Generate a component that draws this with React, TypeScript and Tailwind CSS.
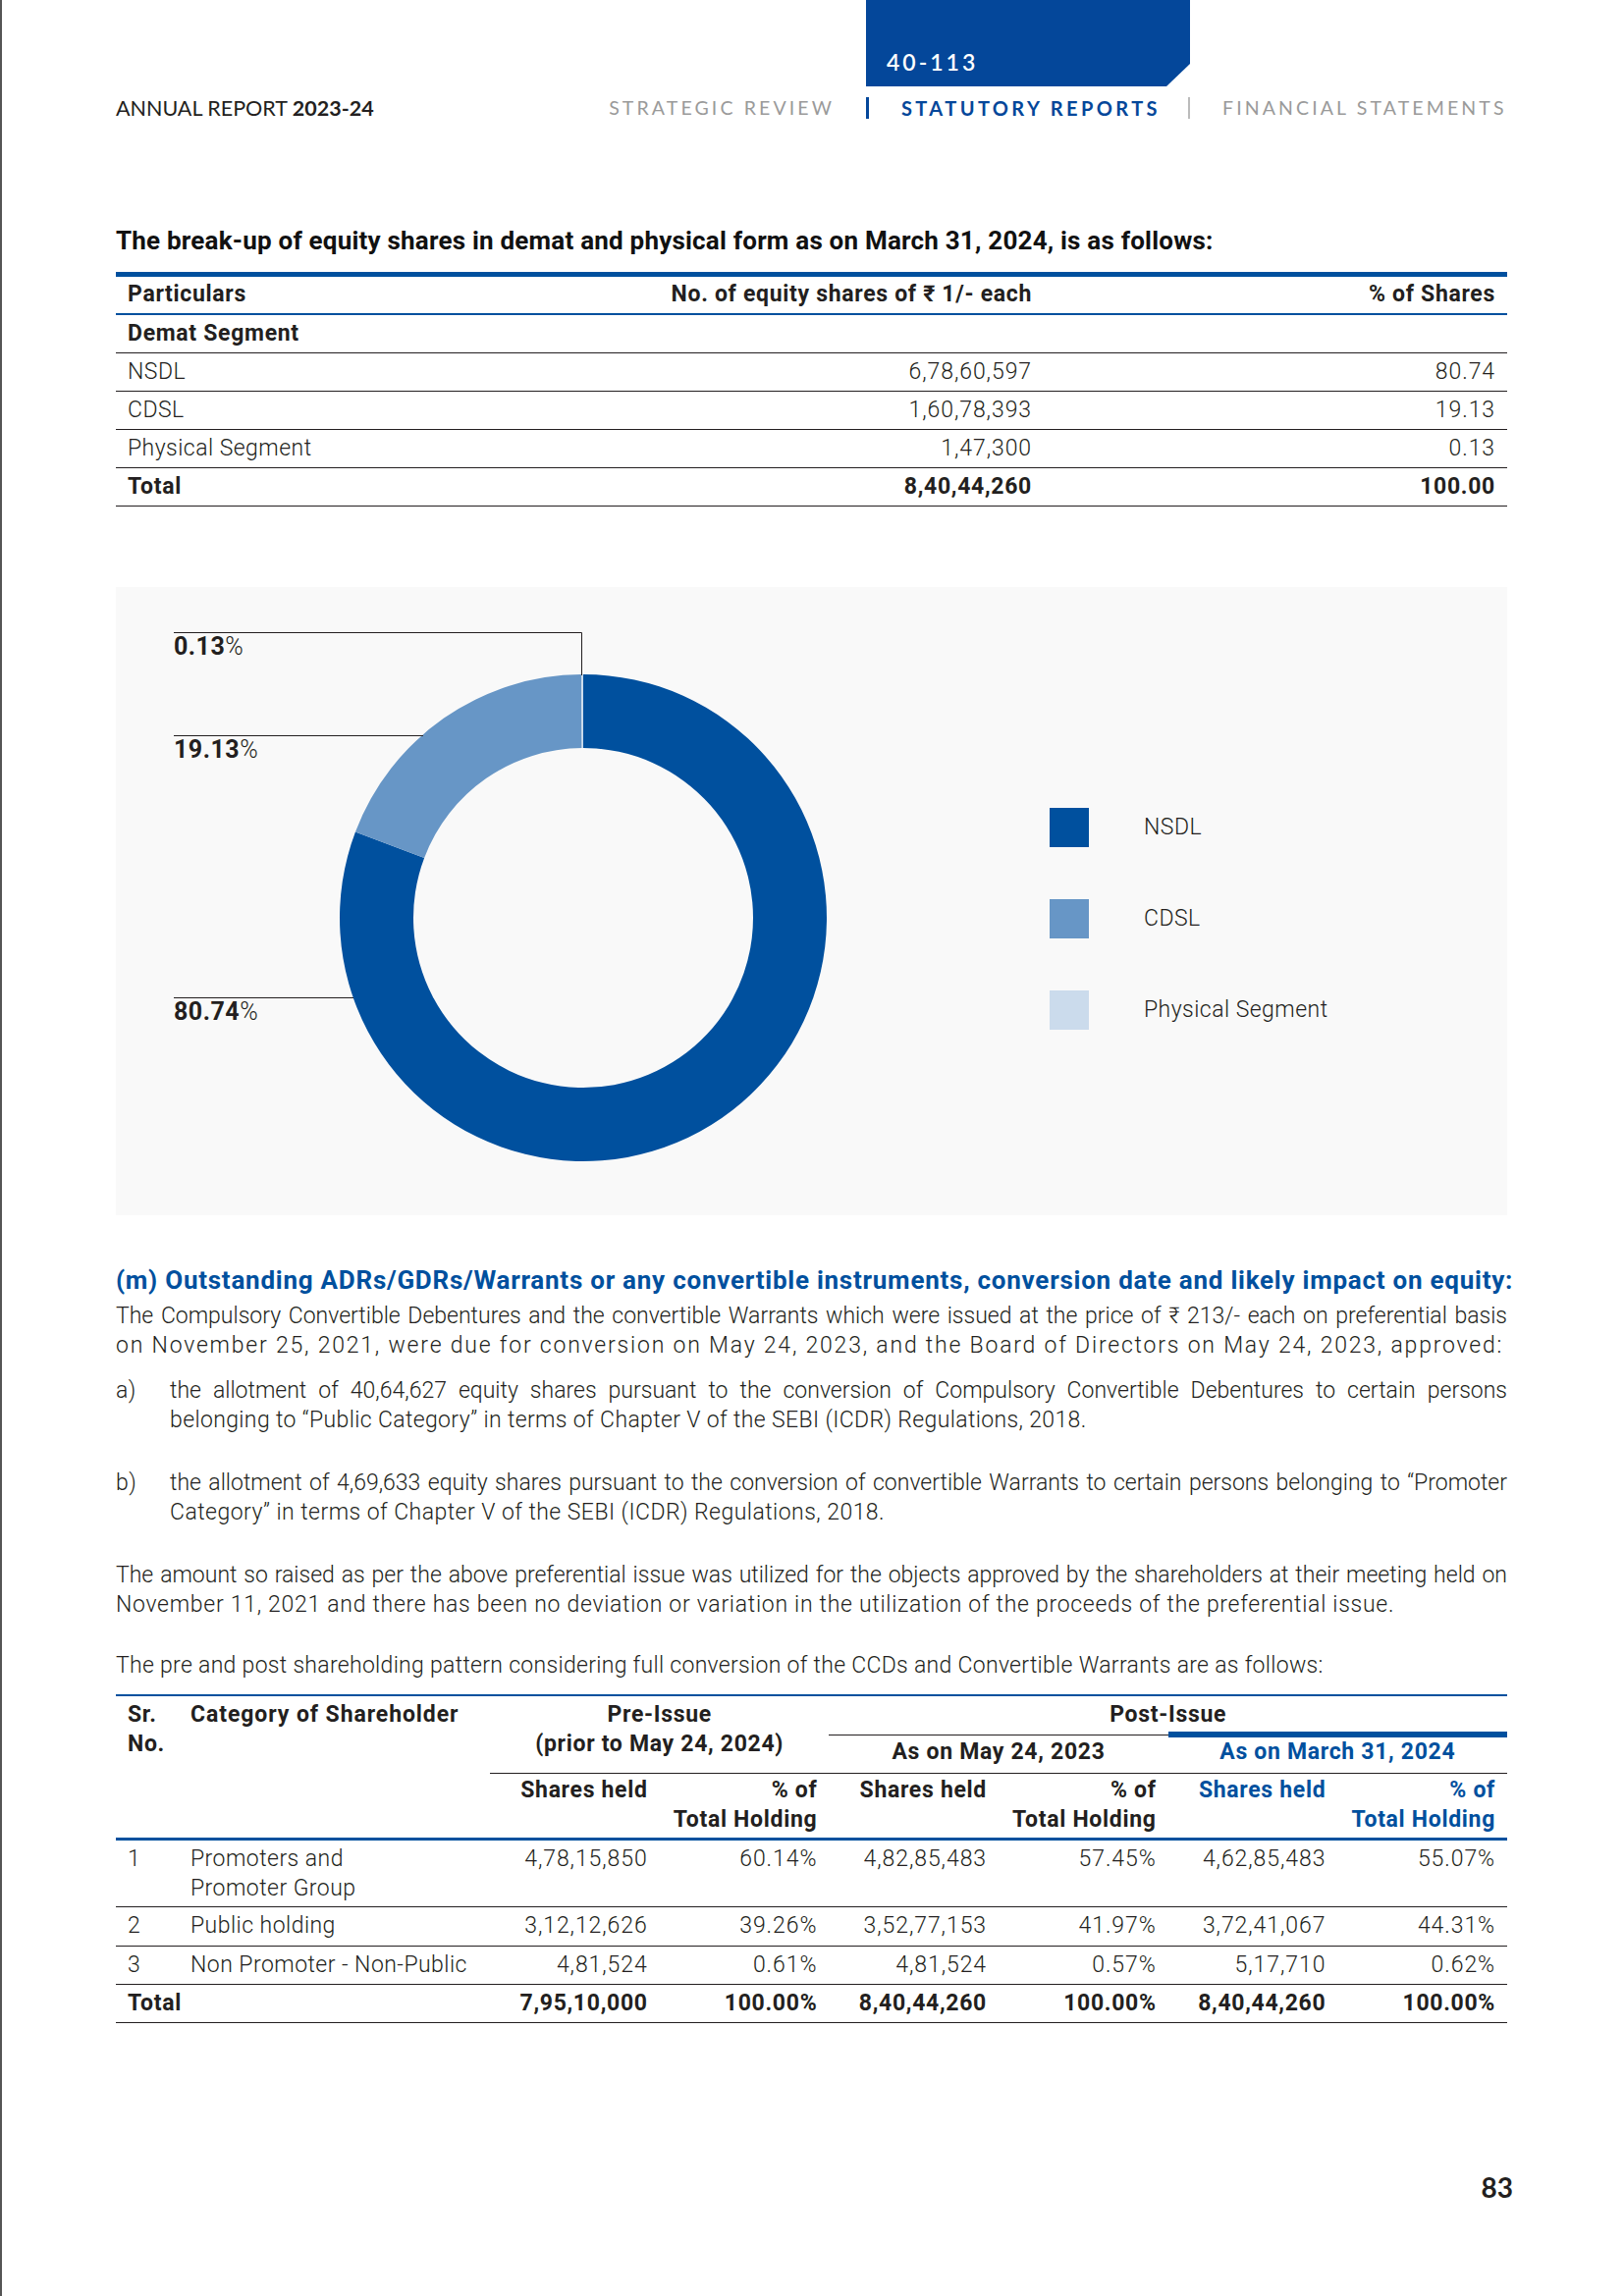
import React from 'react';

const slices = [
  { label: 'NSDL', pct: 80.74, color: '#00509e' },
  { label: 'CDSL', pct: 19.13, color: '#6796c6' },
  { label: 'Physical Segment', pct: 0.13, color: '#cbdbec' },
];

const polar = (cx: number, cy: number, r: number, deg: number) => {
  const a = ((deg - 90) * Math.PI) / 180;
  return [cx + r * Math.cos(a), cy + r * Math.sin(a)];
};

const ringSlice = (cx: number, cy: number, ro: number, ri: number, a0: number, a1: number) => {
  const large = a1 - a0 > 180 ? 1 : 0;
  const [x0, y0] = polar(cx, cy, ro, a0);
  const [x1, y1] = polar(cx, cy, ro, a1);
  const [x2, y2] = polar(cx, cy, ri, a1);
  const [x3, y3] = polar(cx, cy, ri, a0);
  return `M${x0} ${y0} A${ro} ${ro} 0 ${large} 1 ${x1} ${y1} L${x2} ${y2} A${ri} ${ri} 0 ${large} 0 ${x3} ${y3} Z`;
};

// justified line that is not the last one of its paragraph
const J: React.FC<{ children: React.ReactNode }> = ({ children }) => (
  <span className="block tracking-normal text-justify [text-align-last:justify]">{children}</span>
);

const breakup = [
  { name: 'NSDL', shares: '6,78,60,597', pct: '80.74' },
  { name: 'CDSL', shares: '1,60,78,393', pct: '19.13' },
  { name: 'Physical Segment', shares: '1,47,300', pct: '0.13' },
];

const pattern = [
  { no: '1', cat: ['Promoters and', 'Promoter Group'], v: ['4,78,15,850', '60.14%', '4,82,85,483', '57.45%', '4,62,85,483', '55.07%'], h: 'h-[68px]' },
  { no: '2', cat: ['Public holding'], v: ['3,12,12,626', '39.26%', '3,52,77,153', '41.97%', '3,72,41,067', '44.31%'], h: 'h-[40px]' },
  { no: '3', cat: ['Non Promoter - Non-Public'], v: ['4,81,524', '0.61%', '4,81,524', '0.57%', '5,17,710', '0.62%'], h: 'h-[39px]' },
];

const totals = ['7,95,10,000', '100.00%', '8,40,44,260', '100.00%', '8,40,44,260', '100.00%'];

const Donut: React.FC = () => {
  let acc = 0;
  return (
    <div className="relative w-[665px] h-[560px] shrink-0">
      <svg width="665" height="560" className="block">
        {slices.map((s) => {
          const a0 = acc;
          acc += (s.pct / 100) * 360;
          return <path key={s.label} d={ringSlice(417, 297, 248, 173, a0, acc)} fill={s.color} />;
        })}
        <polyline points="0,6.5 415.5,6.5 415.5,50" fill="none" stroke="#231f20" strokeWidth="1" />
        <line x1="0" y1="111.5" x2="254" y2="111.5" stroke="#231f20" strokeWidth="1" />
        <line x1="0" y1="378.5" x2="183" y2="378.5" stroke="#231f20" strokeWidth="1" />
      </svg>
      <div className="absolute left-0 top-[7px] text-[25px] leading-[28px] tracking-[0.02em]"><span className="font-bold">0.13</span><span className="font-light">%</span></div>
      <div className="absolute left-0 top-[112px] text-[25px] leading-[28px] tracking-[0.02em]"><span className="font-bold">19.13</span><span className="font-light">%</span></div>
      <div className="absolute left-0 top-[379px] text-[25px] leading-[28px] tracking-[0.02em]"><span className="font-bold">80.74</span><span className="font-light">%</span></div>
    </div>
  );
};

export default function App() {
  return (
    <div className="w-[1654px] min-h-[2339px] bg-white border-l-2 border-[#555] pl-[116px] pr-[119px] font-['Roboto',sans-serif] text-[#231f20]">
      {/* running header */}
      <header className="flex items-end font-['Lato',sans-serif]">
        <div className="flex-1 h-[44px] flex items-center text-[21.5px] text-[#231f20]">
          ANNUAL REPORT&nbsp;<span className="font-bold">2023-24</span>
        </div>
        <div className="h-[44px] flex items-center pr-[32px] text-[19.5px] tracking-[0.16em] text-[#9a9a9a]">STRATEGIC REVIEW</div>
        <div className="w-[330px] flex flex-col">
          <div className="h-[88px] bg-[#04479a] flex items-end pl-[21px] pb-[11px] [clip-path:polygon(0_0,100%_0,100%_74%,calc(100%-24px)_100%,0_100%)]">
            <span className="text-white text-[23px] leading-[28px] font-semibold tracking-[0.13em]">40-113</span>
          </div>
          <div className="h-[44px] flex items-center">
            <span className="w-[3px] h-[22px] bg-[#04479a]"></span>
            <span className="ml-[33px] text-[20px] font-bold tracking-[0.17em] text-[#04479a] whitespace-nowrap">STATUTORY REPORTS</span>
            <span className="ml-auto w-[2px] h-[22px] bg-[#bbbbbb]"></span>
          </div>
        </div>
        <div className="w-[323px] h-[44px] flex items-center pl-[33px] text-[19.5px] tracking-[0.16em] text-[#9a9a9a] whitespace-nowrap">FINANCIAL STATEMENTS</div>
      </header>

      {/* break-up table */}
      <h2 className="mt-[97px] text-[26px] leading-[32px] font-bold tracking-[0.008em] text-[#111] whitespace-nowrap">
        The break-up of equity shares in demat and physical form as on March 31, 2024, is as follows:
      </h2>
      <div className="mt-[16px] border-t-[5px] border-[#00509e] text-[23px]">
        <div className="grid grid-cols-[500px_445px_1fr] items-center h-[39px] border-b-2 border-[#00509e] font-bold tracking-[0.03em]">
          <div className="pl-[12px]">Particulars</div>
          <div className="pr-[12px] text-right">No. of equity shares of ₹ 1/- each</div>
          <div className="pr-[12px] text-right">% of Shares</div>
        </div>
        <div className="grid grid-cols-[500px_445px_1fr] items-center h-[39px] border-b border-[#231f20] font-bold tracking-[0.03em]">
          <div className="pl-[12px]">Demat Segment</div>
        </div>
        {breakup.map((r) => (
          <div key={r.name} className="grid grid-cols-[500px_445px_1fr] items-center h-[39px] border-b border-[#231f20] font-light">
            <div className="pl-[12px] tracking-[0.02em]">{r.name}</div>
            <div className="pr-[12px] text-right tracking-[0.04em]">{r.shares}</div>
            <div className="pr-[12px] text-right tracking-[0.04em]">{r.pct}</div>
          </div>
        ))}
        <div className="grid grid-cols-[500px_445px_1fr] items-center h-[39px] border-b border-[#231f20] font-bold tracking-[0.03em]">
          <div className="pl-[12px]">Total</div>
          <div className="pr-[12px] text-right">8,40,44,260</div>
          <div className="pr-[12px] text-right">100.00</div>
        </div>
      </div>

      {/* chart */}
      <div className="mt-[82px] h-[640px] bg-[#f9f9f9] flex items-start pl-[59px] pt-[40px]">
        <Donut />
        <div className="ml-[227px] mt-[185px] flex flex-col gap-[53px]">
          {slices.map((s) => (
            <div key={s.label} className="flex items-center h-[40px]">
              <span className="w-[40px] h-[40px]" style={{ backgroundColor: s.color }}></span>
              <span className="ml-[56px] text-[23px] font-light tracking-[0.02em]">{s.label}</span>
            </div>
          ))}
        </div>
      </div>

      {/* (m) section */}
      <h3 className="mt-[50px] text-[26px] leading-[32px] font-bold tracking-[0.029em] text-[#00509e] whitespace-nowrap">
        (m) Outstanding ADRs/GDRs/Warrants or any convertible instruments, conversion date and likely impact on equity:
      </h3>
      <div className="text-[23px] leading-[30px] font-light tracking-[0.02em]">
        <p className="mt-[6px]">
          <J>The Compulsory Convertible Debentures and the convertible Warrants which were issued at the price of ₹ 213/- each on preferential basis</J>
          <span className="tracking-[0.078em] whitespace-nowrap">on November 25, 2021, were due for conversion on May 24, 2023, and the Board of Directors on May 24, 2023, approved:</span>
        </p>
        <div className="mt-[16px] flex">
          <span className="w-[55px] shrink-0">a)</span>
          <p className="flex-1">
            <J>the allotment of 40,64,627 equity shares pursuant to the conversion of Compulsory Convertible Debentures to certain persons</J>
            <span className="tracking-[0.016em]">belonging to “Public Category” in terms of Chapter V of the SEBI (ICDR) Regulations, 2018.</span>
          </p>
        </div>
        <div className="mt-[34px] flex">
          <span className="w-[55px] shrink-0">b)</span>
          <p className="flex-1">
            <J>the allotment of 4,69,633 equity shares pursuant to the conversion of convertible Warrants to certain persons belonging to “Promoter</J>
            Category” in terms of Chapter V of the SEBI (ICDR) Regulations, 2018.
          </p>
        </div>
        <p className="mt-[34px]">
          <J>The amount so raised as per the above preferential issue was utilized for the objects approved by the shareholders at their meeting held on</J>
          <span className="tracking-[0.031em] whitespace-nowrap">November 11, 2021 and there has been no deviation or variation in the utilization of the proceeds of the preferential issue.</span>
        </p>
        <p className="mt-[32px] tracking-[0.013em]">
          The pre and post shareholding pattern considering full conversion of the CCDs and Convertible Warrants are as follows:
        </p>
      </div>

      {/* shareholding pattern table */}
      <div className="mt-[14px] border-t-2 border-[#00509e] text-[23px] leading-[30px]">
        <div className="grid grid-cols-[64px_317px_repeat(6,minmax(0,1fr))] grid-rows-[36px_43px_68px] font-bold tracking-[0.03em]">
          <div className="col-start-1 row-start-1 row-span-3 pl-[12px] pt-[4px] border-b-[3px] border-[#00509e]">Sr.<br />No.</div>
          <div className="col-start-2 row-start-1 row-span-3 pl-[12px] pt-[4px] border-b-[3px] border-[#00509e] whitespace-nowrap tracking-[0.04em]">Category of Shareholder</div>
          <div className="col-start-3 col-span-2 row-start-1 row-span-2 pt-[4px] text-center border-b border-[#231f20]">Pre-Issue<br />(prior to May 24, 2024)</div>
          <div className="col-start-5 col-span-4 row-start-1 pt-[4px] text-center">Post-Issue</div>
          <div className="col-start-5 col-span-2 row-start-2 mt-[3px] pt-[2px] text-center border-t border-b border-[#231f20]">As on May 24, 2023</div>
          <div className="col-start-7 col-span-2 row-start-2 text-center text-[#00509e] border-t-[6px] border-t-[#00509e] border-b border-b-[#231f20]">As on March 31, 2024</div>
          {[0, 1, 2].map((i) => (
            <React.Fragment key={i}>
              <div className={`row-start-3 pt-[2px] pr-[12px] text-right border-b-[3px] border-[#00509e] whitespace-nowrap ${i === 2 ? 'text-[#00509e]' : ''}`}>Shares held</div>
              <div className={`row-start-3 pt-[2px] pr-[12px] text-right border-b-[3px] border-[#00509e] whitespace-nowrap ${i === 2 ? 'text-[#00509e]' : ''}`}>% of<br />Total Holding</div>
            </React.Fragment>
          ))}
        </div>
        {pattern.map((r) => (
          <div key={r.no} className={`grid grid-cols-[64px_317px_repeat(6,minmax(0,1fr))] ${r.h} pt-[4px] border-b border-[#231f20] font-light`}>
            <div className="pl-[12px]">{r.no}</div>
            <div className="pl-[12px] tracking-[0.02em]">
              {r.cat.map((c) => (
                <div key={c}>{c}</div>
              ))}
            </div>
            {r.v.map((v, i) => (
              <div key={i} className="pr-[12px] text-right tracking-[0.04em]">{v}</div>
            ))}
          </div>
        ))}
        <div className="grid grid-cols-[64px_317px_repeat(6,minmax(0,1fr))] h-[39px] pt-[4px] border-b border-[#231f20] font-bold tracking-[0.03em]">
          <div className="col-span-2 pl-[12px]">Total</div>
          {totals.map((v, i) => (
            <div key={i} className="pr-[12px] text-right">{v}</div>
          ))}
        </div>
      </div>

      <div className="mt-[150px] mr-[-6px] text-right font-['Lato',sans-serif] font-bold text-[28px] leading-[34px] text-[#231f20]">83</div>
    </div>
  );
}
